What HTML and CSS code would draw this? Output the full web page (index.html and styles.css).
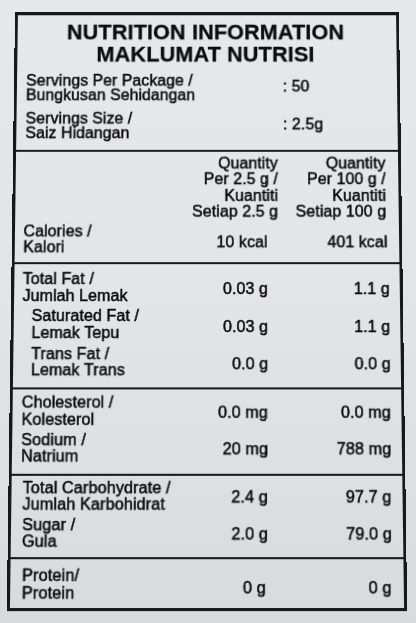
FILE: index.html
```html
<!DOCTYPE html>
<html lang="en">
<head>
    <meta charset="UTF-8">
    <meta name="viewport" content="width=device-width, initial-scale=1.0">
    <title>Nutrition Information</title>
    <link rel="stylesheet" href="styles.css">
</head>
<body>
    <div class="label">
        <section class="sec sec-head">
            <h1 class="title">NUTRITION INFORMATION<br>MAKLUMAT NUTRISI</h1>
            <div class="serve">
                <div>Servings Per Package /<br>Bungkusan Sehidangan</div>
                <div class="serve-val">: 50</div>
            </div>
            <div class="serve serve-size">
                <div>Servings Size /<br>Saiz Hidangan</div>
                <div class="serve-val">: 2.5g</div>
            </div>
        </section>

        <section class="sec sec-energy">
            <div class="row qty-head">
                <div></div>
                <div class="v1">Quantity<br>Per 2.5 g /<br>Kuantiti<br>Setiap 2.5 g</div>
                <div class="v2">Quantity<br>Per 100 g /<br>Kuantiti<br>Setiap 100 g</div>
            </div>
            <div class="row kcal">
                <div>Calories /<br>Kalori</div>
                <div class="v1">10 kcal</div>
                <div class="v2">401 kcal</div>
            </div>
        </section>

        <section class="sec sec-fat">
            <div class="row">
                <div>Total Fat /<br>Jumlah Lemak</div>
                <div class="v1">0.03 g</div>
                <div class="v2">1.1 g</div>
            </div>
            <div class="row sub">
                <div>Saturated Fat /<br>Lemak Tepu</div>
                <div class="v1">0.03 g</div>
                <div class="v2">1.1 g</div>
            </div>
            <div class="row sub">
                <div>Trans Fat /<br>Lemak Trans</div>
                <div class="v1">0.0 g</div>
                <div class="v2">0.0 g</div>
            </div>
        </section>

        <section class="sec sec-mineral">
            <div class="row">
                <div>Cholesterol /<br>Kolesterol</div>
                <div class="v1">0.0 mg</div>
                <div class="v2">0.0 mg</div>
            </div>
            <div class="row">
                <div>Sodium /<br>Natrium</div>
                <div class="v1">20 mg</div>
                <div class="v2">788 mg</div>
            </div>
        </section>

        <section class="sec sec-carb">
            <div class="row">
                <div>Total Carbohydrate /<br>Jumlah Karbohidrat</div>
                <div class="v1">2.4 g</div>
                <div class="v2">97.7 g</div>
            </div>
            <div class="row">
                <div>Sugar /<br>Gula</div>
                <div class="v1">2.0 g</div>
                <div class="v2">79.0 g</div>
            </div>
        </section>

        <section class="sec sec-protein">
            <div class="row">
                <div>Protein/<br>Protein</div>
                <div class="v1">0 g</div>
                <div class="v2">0 g</div>
            </div>
        </section>
    </div>
</body>
</html>
```

FILE: styles.css
```css
body, html {
    margin: 0;
    padding: 0;
    height: 100%;
    font-family: 'Liberation Sans', Arial, sans-serif;
    color: #0b0c0c;
    background: linear-gradient(180deg, #e6e8ea 0%, #e2e4e6 50%, #d8dadc 100%);
}
body {
    padding: 5.6px 13px 0 11px;
    box-sizing: border-box;
    overflow: hidden;
}

/* the label is photographed a little tilted, top further away */
.label {
    width: 392px;
    border: 3px solid #151918;
    box-sizing: border-box;
    font-size: 16px;
    letter-spacing: 0.1px;
    white-space: nowrap;
    -webkit-text-stroke: 0.5px #0b0c0c;
    transform: perspective(600px) rotateX(2.4deg);
}
.sec {
    display: flex;
    flex-direction: column;
    border-top: 2px solid #151918;
}
.sec-head {
    border-top: none;
    padding: 5.5px 10px 9.1px 9.2px;
}
.title {
    margin: 0 -2px 6.3px -4px;
    font-size: 22px;
    line-height: 23.9px;
    letter-spacing: 0.15px;
    font-weight: 700;
    text-align: center;
    -webkit-text-stroke: 0.3px #0b0c0c;
}
.serve {
    display: grid;
    grid-template-columns: minmax(0, 1fr) 106px;
    align-items: center;
    line-height: 15.4px;
}
.serve-size {
    margin-top: 8.3px;
}
.serve-val {
    padding-bottom: 2px;
}
.row {
    display: grid;
    grid-template-columns: minmax(0, 1fr) 106px 122px;
    align-items: center;
}
.v1, .v2 {
    text-align: right;
}
.sub > div:first-child {
    padding-left: 9.3px;
}

/* line pitch differs a bit per block on the print */
.sec-energy {
    padding: 3.9px 12.6px 8.1px 8.5px;
    gap: 3.8px;
}
.qty-head {
    line-height: 16.5px;
    align-items: end;
}
.qty-head .v1 {
    margin-right: -13.2px;
}
.kcal {
    line-height: 15.4px;
    margin-right: -0.9px;
}
.kcal .v1, .kcal .v2 {
    padding-top: 6.4px;
}
.kcal .v1 {
    margin-right: -1.7px;
}
.sec-fat {
    padding: 6.5px 10px 7.7px 8.4px;
    gap: 3.6px;
    line-height: 16.9px;
}
.sec-fat .v1, .sec-fat .v2 {
    padding-top: 4px;
}
.sec-mineral {
    padding: 5.2px 10.5px 7.8px 9px;
    gap: 3.2px;
    line-height: 16.6px;
}
.sec-mineral .v1, .sec-mineral .v2 {
    padding-top: 2.5px;
}
.sec-carb {
    padding: 4.15px 11px 6.65px 11px;
    gap: 4px;
    line-height: 16.2px;
}
.sec-carb .v1, .sec-carb .v2 {
    padding-top: 2.4px;
}
.sec-protein {
    padding: 6.55px 12px 5.35px 11.5px;
    line-height: 17.6px;
}
.sec-protein .v1, .sec-protein .v2 {
    padding-top: 6.8px;
}
.sec-protein .v1 {
    margin-right: 1.2px;
}
```
